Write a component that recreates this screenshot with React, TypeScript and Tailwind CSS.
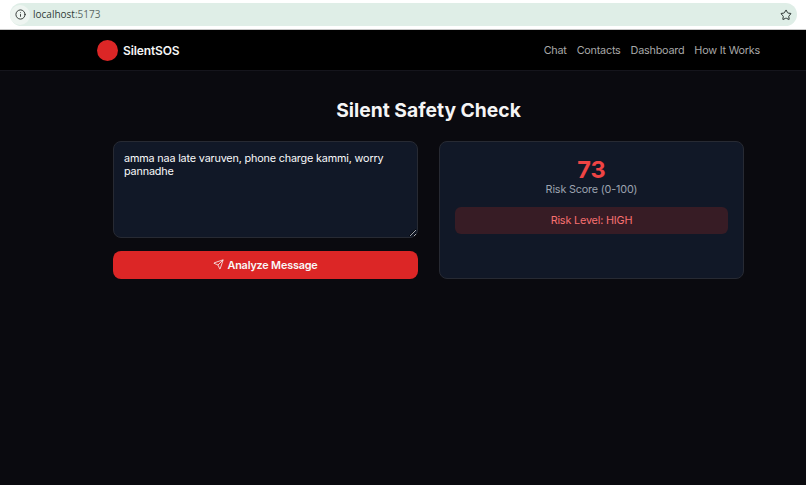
import { Info, Star, Send } from "lucide-react";

export default function App() {
  return (
    <div className="w-[806px] h-[485px] overflow-hidden flex flex-col bg-[#0a0a0f] text-white font-['Inter',sans-serif]">
      <div className="h-[30px] shrink-0 bg-white flex items-start pl-[10px] pr-[9px] pt-[3px] border-b border-[#c8c8c8]">
        <div className="flex-1 h-[23px] rounded-full bg-[#dfeee7] flex items-center pr-[5px]">
          <div className="w-[20px] h-[20px] rounded-full bg-[#eef5f1] flex items-center justify-center">
            <Info size={11} className="text-[#2a2f2d]" strokeWidth={2} />
          </div>
          <span className="ml-[3px] text-[10px] font-['Open_Sans',sans-serif] text-[#2f3b37]">
            localhost<span className="text-[#5c6965]">:5173</span>
          </span>
          <Star size={12} className="ml-auto text-[#26302d]" strokeWidth={2} />
        </div>
      </div>

      <nav className="h-[41px] shrink-0 bg-black border-b border-[#15151c] flex items-center justify-between pl-[97px] pr-[46px]">
        <div className="flex items-center gap-[5px]">
          <div className="w-[21px] h-[21px] rounded-full bg-[#dc2626]" />
          <span className="text-[12px] font-semibold text-[#f5f5f5] tracking-[-0.01em] mt-[1px]">SilentSOS</span>
        </div>
        <div className="flex items-center gap-[10px] text-[10.8px] tracking-[-0.02em] text-[#a8a8a8] mt-[2px]">
          <span>Chat</span>
          <span>Contacts</span>
          <span>Dashboard</span>
          <span>How It Works</span>
        </div>
      </nav>

      <main className="flex-1 flex flex-col items-center pl-[113px] pr-[62px]">
        <h1 className="mt-[25px] text-[19.3px] leading-[28px] font-bold text-[#f5f5f5]">Silent Safety Check</h1>
        <div className="mt-[17px] w-full flex gap-[21px]">
          <div className="w-[305px] shrink-0 flex flex-col gap-[13px]">
            <textarea
              readOnly
              value="amma naa late varuven, phone charge kammi, worry pannadhe"
              className="w-full h-[97px] rounded-[8px] bg-[#111827] border border-[#272a33] px-[10px] py-[10px] text-[10.8px] tracking-[-0.015em] leading-[13px] text-[#f9fafb] outline-none"
            />
            <button className="h-[28px] rounded-[8px] bg-[#dc2626] flex items-center justify-center gap-[3px] text-[10.8px] tracking-[-0.015em] font-semibold text-[#f8f8f8]">
              <Send size={11} strokeWidth={1.75} className="-mt-[2px]" />
              <span className="mt-[2px]">Analyze Message</span>
            </button>
          </div>
          <div className="flex-1 h-[138px] rounded-[8px] bg-[#111827] border border-[#272a33] px-[15px] pt-[14px] flex flex-col items-center">
            <div className="text-[23.5px] leading-[28px] font-bold text-[#ef4444]">73</div>
            <div className="text-[10.8px] tracking-[-0.015em] leading-[13px] text-[#9ca3af] -mt-[1px]">Risk Score (0-100)</div>
            <div className="mt-[11px] w-full h-[27px] rounded-[6px] bg-[#371c25] flex items-center justify-center text-[10.8px] tracking-[-0.015em] text-[#f87171]">
              <span className="mt-[1px]">Risk Level: HIGH</span>
            </div>
          </div>
        </div>
      </main>
    </div>
  );
}
